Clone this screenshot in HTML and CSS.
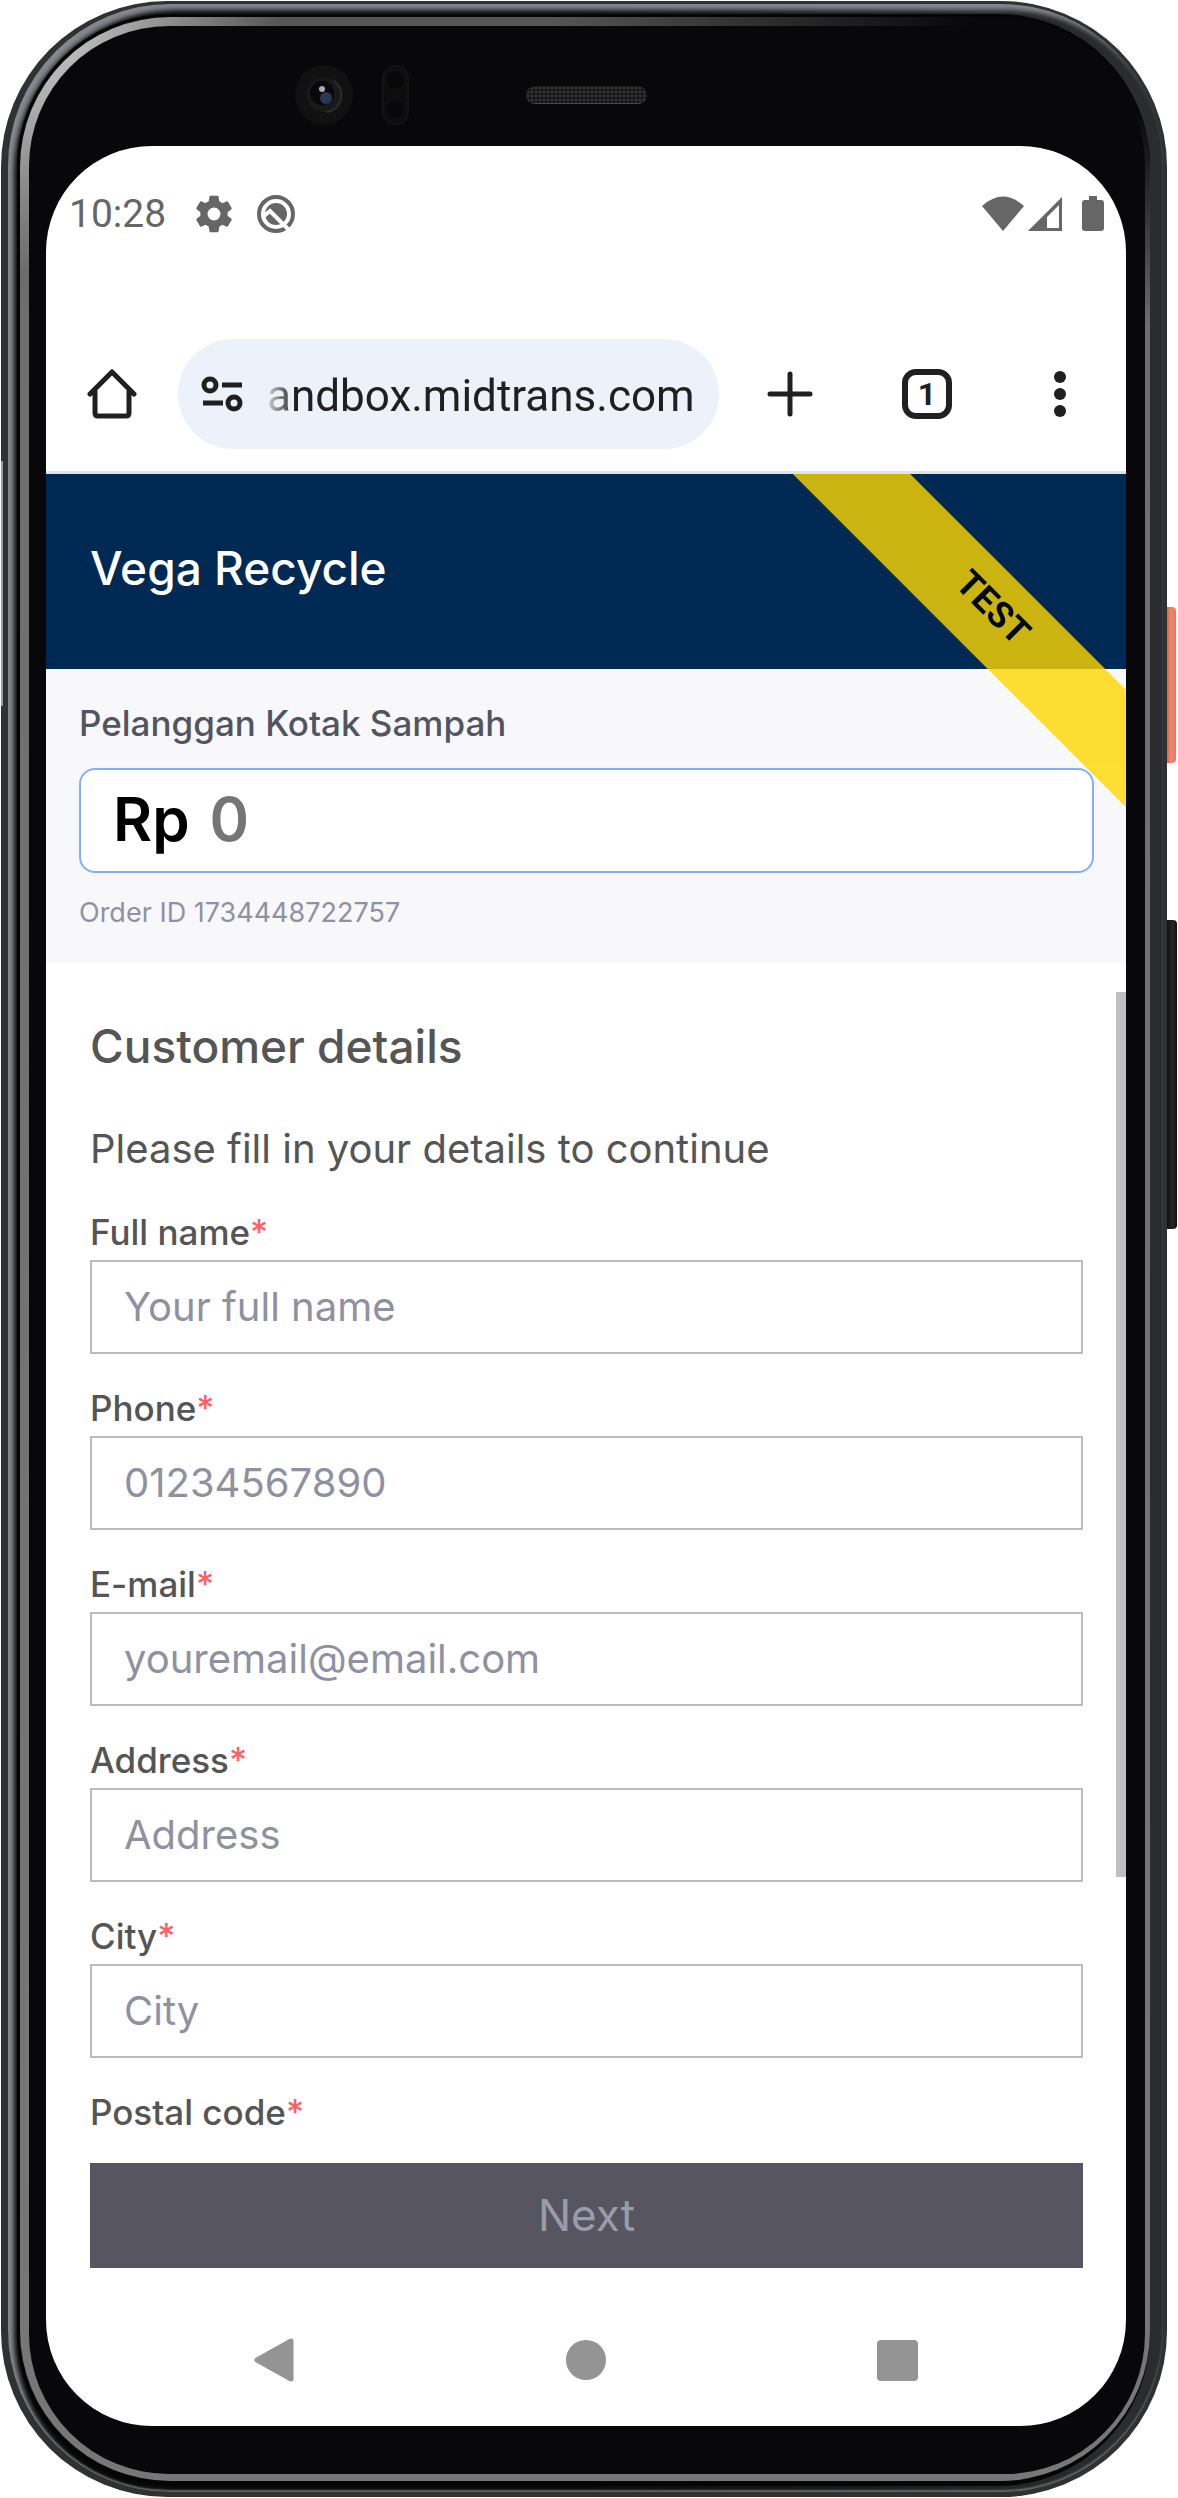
FILE: index.html
```html
<!DOCTYPE html>
<html lang="en">
<head>
<meta charset="utf-8">
<meta name="viewport" content="width=device-width, initial-scale=1">
<title>Vega Recycle</title>
<link rel="stylesheet" href="styles.css">
</head>
<body>
<div class="phone">
  <span class="side-key side-key-power"></span>
  <span class="side-key side-key-volume"></span>
  <span class="side-glint"></span>
  <div class="rim"><div class="groove"><div class="edge"><div class="glass">
    <div class="bezel">
      <svg class="camera" width="60" height="62" viewBox="0 0 60 62" aria-hidden="true">
        <ellipse cx="30" cy="31" rx="29" ry="30" fill="#111112"/>
        <circle cx="30" cy="31" r="17" fill="#19191a"/>
        <path d="M40 17a17 17 0 0 1-8 31" fill="none" stroke="#2c2c2d" stroke-width="2"/>
        <circle cx="28" cy="29" r="12" fill="#08080d"/>
        <circle cx="32" cy="34" r="6" fill="#2c3656"/>
        <circle cx="28" cy="25" r="3" fill="#a8a8ae"/>
      </svg>
      <svg class="sensor" width="27" height="60" viewBox="0 0 27 60" aria-hidden="true">
        <rect x="1" y="1" width="25" height="58" rx="12" fill="#0d0d0e" stroke="#131314" stroke-width="2"/>
        <circle cx="13" cy="15" r="10" fill="#08080a" stroke="#101011" stroke-width="2"/>
        <circle cx="13" cy="44" r="10" fill="#08080a" stroke="#101011" stroke-width="2"/>
      </svg>
      <span class="speaker"></span>
    </div>
    <div class="screen">
      <div class="status">
        <span class="clock">10:28</span>
        <svg class="status-gear" width="38" height="40" viewBox="2 2 20 20" aria-hidden="true"><path fill="#666" d="M19.14 12.94c.04-.3.06-.61.06-.94 0-.32-.02-.64-.07-.94l2.03-1.58a.49.49 0 0 0 .12-.61l-1.92-3.32a.49.49 0 0 0-.59-.22l-2.39.96c-.5-.38-1.03-.7-1.62-.94l-.36-2.54a.48.48 0 0 0-.48-.41h-3.84c-.24 0-.43.17-.47.41l-.36 2.54c-.59.24-1.13.57-1.62.94l-2.39-.96a.48.48 0 0 0-.59.22L2.74 8.87c-.12.21-.08.47.12.61l2.03 1.58c-.05.3-.09.63-.09.94s.02.64.07.94l-2.03 1.58a.49.49 0 0 0-.12.61l1.92 3.32c.12.22.37.29.59.22l2.39-.96c.5.38 1.03.7 1.62.94l.36 2.54c.05.24.24.41.48.41h3.84c.24 0 .44-.17.47-.41l.36-2.54c.59-.24 1.13-.56 1.62-.94l2.39.96c.22.08.47 0 .59-.22l1.92-3.32a.49.49 0 0 0-.12-.61l-2.01-1.58zM12 15.4a3.4 3.4 0 1 1 0-6.8 3.400 3.400 0 0 1 0 6.800z"/></svg>
        <svg width="40" height="40" viewBox="0 0 40 40" aria-hidden="true">
          <circle cx="20" cy="20" r="17" fill="none" stroke="#666" stroke-width="4"/>
          <circle cx="20" cy="20" r="11" fill="#666"/>
          <path d="M8 22l6-5 20 20" fill="none" stroke="#fff" stroke-width="4"/>
        </svg>
        <span class="status-right">
          <svg width="42" height="36" viewBox="0 0 42 36" aria-hidden="true"><path fill="#666" d="M21 35L0 10Q21-9 42 10z"/></svg>
          <svg width="34" height="36" viewBox="0 0 34 36" aria-hidden="true"><path fill="#666" fill-rule="evenodd" d="M34 1v34H0zM31 9L19 21v11h12z"/></svg>
          <svg class="battery" width="22" height="36" viewBox="0 0 22 36" aria-hidden="true"><path fill="#666" d="M7 0h8v4h4q3 0 3 3v25q0 3-3 3H3q-3 0-3-3V7q0-3 3-3h4z"/></svg>
        </span>
      </div>
      <div class="toolbar">
        <button class="icon-button" type="button" aria-label="Home">
          <svg width="50" height="50" viewBox="0 0 50 50" fill="none" stroke="#202020" stroke-width="5" stroke-linecap="round" stroke-linejoin="round" aria-hidden="true"><path d="M3 25L25 3l22 22M8 21v23q0 3 3 3h28q3 0 3-3V21"/></svg>
        </button>
        <div class="address">
          <svg width="42" height="36" viewBox="0 0 42 36" fill="none" stroke="#202020" stroke-width="5" aria-hidden="true"><circle cx="9" cy="9" r="6"/><path d="M21 9h20M2 27h20"/><circle cx="33" cy="27" r="6"/></svg>
          <input class="address-input" type="text" value="andbox.midtrans.com" aria-label="Address bar">
        </div>
        <div class="toolbar-actions">
          <button class="icon-button" type="button" aria-label="New tab">
            <svg width="50" height="50" viewBox="0 0 50 50" stroke="#202020" stroke-width="5" stroke-linecap="round" aria-hidden="true"><path d="M25 5v40M5 25h40"/></svg>
          </button>
          <button class="tab-count" type="button" aria-label="Open tabs">1</button>
          <button class="icon-button" type="button" aria-label="Menu">
            <svg width="42" height="50" viewBox="0 0 42 50" fill="#202020" aria-hidden="true"><circle cx="21" cy="8" r="6"/><circle cx="21" cy="25" r="6"/><circle cx="21" cy="42" r="6"/></svg>
          </button>
        </div>
      </div>
      <div class="page">
        <div class="ribbon-clip"><div class="ribbon">TEST</div></div>
        <header class="merchant"><h1>Vega Recycle</h1></header>
        <section class="order">
          <label class="order-title" for="amount">Pelanggan Kotak Sampah</label>
          <div class="amount"><span>Rp</span><input id="amount" class="amount-input" type="text" placeholder="0"></div>
          <p class="order-id">Order ID 1734448722757</p>
        </section>
        <main class="details">
          <span class="scrollbar"></span>
          <h2>Customer details</h2>
          <p class="lead">Please fill in your details to continue</p>
          <form>
            <div class="field"><label for="name">Full name<em>*</em></label><input id="name" type="text" placeholder="Your full name"></div>
            <div class="field"><label for="phone">Phone<em>*</em></label><input id="phone" type="tel" placeholder="01234567890"></div>
            <div class="field"><label for="email">E-mail<em>*</em></label><input id="email" type="email" placeholder="youremail@email.com"></div>
            <div class="field"><label for="address">Address<em>*</em></label><input id="address" type="text" placeholder="Address"></div>
            <div class="field"><label for="city">City<em>*</em></label><input id="city" type="text" placeholder="City"></div>
            <div class="field field-last"><span class="field-name">Postal code<em>*</em></span></div>
            <button class="next" type="submit">Next</button>
          </form>
        </main>
      </div>
      <nav class="system-nav" aria-label="System">
        <button class="icon-button" type="button" aria-label="Back"><svg width="42" height="46" viewBox="0 0 42 46" aria-hidden="true"><path d="M4 23L38 4v38z" fill="#949494" stroke="#949494" stroke-width="5" stroke-linejoin="round"/></svg></button>
        <button class="icon-button" type="button" aria-label="Home screen"><svg width="42" height="46" viewBox="0 0 42 46" aria-hidden="true"><circle cx="21" cy="23" r="20" fill="#949494"/></svg></button>
        <button class="icon-button" type="button" aria-label="Recent apps"><svg width="42" height="46" viewBox="0 0 42 46" aria-hidden="true"><rect y="3" width="41" height="41" rx="4" fill="#949494"/></svg></button>
      </nav>
    </div>
  </div></div></div></div>
</div>
</body>
</html>
```
FILE: styles.css
```css
* { box-sizing: border-box; }
body {
  margin: 0;
  background: #fff;
  font-family: Inter, "Open Sans", sans-serif;
  color: #555;
}
h1, h2, p { margin: 0; font-weight: 400; }
svg { display: block; flex: none; }
button, input { font: inherit; color: inherit; }

/* Handset */
.phone {
  position: relative;
  margin: 1px 11px 1px 1px;
  padding: 3px 4px 5px 7px;
  border-radius: 166px;
  background: #303131;
}
.rim {
  padding: 10px 13px 6px 9px;
  border-radius: 162px;
  background: linear-gradient(to right, #0a0a0b 50%, #2b2c2e 96%);
  box-shadow: inset 6px 6px 5px #85888e, inset 0 -2px 2px #66686a;
}
.groove {
  padding: 3px 0 5px 3px;
  border-radius: 152px;
  background: #050505;
}
.edge {
  padding: 9px 5px 7px 9px;
  border-radius: 150px;
  background:
    radial-gradient(600px 310px at top right, #08080a 30%, transparent) top / 100% 320px no-repeat,
    radial-gradient(circle at top left, #bbb 60px, transparent 260px),
    linear-gradient(#555, #6e6e6e 300px, #777);
}
.glass {
  padding: 0 19px 48px 17px;
  border-radius: 140px;
  background: #08080a;
}
.side-key {
  position: absolute;
  left: 100%;
  width: 9px;
  border-radius: 0 4px 4px 0;
}
.side-key-power { top: 606px; height: 156px; background: linear-gradient(to right, #d9684f, #f0866c 40%, #e9785d); }
.side-key-volume { top: 919px; height: 309px; width: 10px; background: linear-gradient(to right, #111, #262727 60%, #111); }
.side-glint { position: absolute; left: 0; top: 460px; width: 2px; height: 245px; background: #9b9d9c; }
.bezel {
  display: flex;
  align-items: center;
  height: 120px;
  padding: 18px 0 0 248px;
}
.sensor { margin: 0 117px 0 28px; }
.speaker {
  width: 121px;
  height: 18px;
  border-radius: 9px;
  border-bottom: 1px solid #4a4a4a;
  background: radial-gradient(#333 1px, #151515 2px) 0 0 / 4px 4px;
}

/* Screen */
.screen {
  overflow: hidden;
  border-radius: 106px;
  background: #fff;
}
.status {
  display: flex;
  align-items: center;
  height: 193px;
  padding: 48px 22px 105px 23px;
}
.clock { font: 39px/40px Roboto, sans-serif; color: #666; }
.status-gear { margin: 0 23px 0 29px; }
.status-right { display: flex; align-items: center; gap: 4px; margin-left: auto; }
.battery { margin-left: 16px; }
.toolbar {
  display: flex;
  align-items: center;
  padding: 0 45px 22px 41px;
  border-bottom: 3px solid #dfe3e2;
}
.icon-button { padding: 0; border: 0; background: none; }
.address {
  display: flex;
  flex: 1;
  align-items: center;
  gap: 24px;
  min-width: 0;
  height: 110px;
  margin: 0 46px 0 41px;
  padding: 0 16px 0 23px;
  border-radius: 55px;
  background: #ecf1fa;
}
.address-input {
  flex: 1;
  min-width: 0;
  padding: 4px 0 0;
  border: 0;
  background: none;
  font: 44px/56px Roboto, sans-serif;
  color: #202020;
  -webkit-mask-image: linear-gradient(to right, rgba(0, 0, 0, .15), #000 28px);
  mask-image: linear-gradient(to right, rgba(0, 0, 0, .15), #000 28px);
}
.toolbar-actions { display: flex; align-items: center; gap: 87px; }
.tab-count {
  width: 50px;
  height: 50px;
  padding: 0;
  border: 6px solid #202020;
  border-radius: 14px;
  background: none;
  font: 700 32px/38px Roboto, sans-serif;
  color: #202020;
}

/* Payment page */
.page { position: relative; }
.ribbon-clip {
  position: absolute;
  top: 0;
  right: 0;
  width: 400px;
  height: 400px;
  overflow: hidden;
  pointer-events: none;
}
.ribbon {
  position: absolute;
  top: 96px;
  right: -213px;
  width: 700px;
  padding-bottom: 10px;
  background: #ffd700;
  opacity: .8;
  color: #000;
  font: 700 36px/73px Roboto, sans-serif;
  text-align: center;
  transform: rotate(45deg);
}
.merchant { padding: 64px 44px 71px; background: #002953; color: #fff; }
.merchant h1 { font-size: 46px; line-height: 60px; font-weight: 500; }
.order { padding: 34px 32px 30px 33px; background: #f8f8fb; }
.order-title {
  display: block;
  font-size: 35px;
  line-height: 40px;
  font-weight: 500;
  color: #535461;
}
.amount {
  display: flex;
  align-items: center;
  gap: 20px;
  height: 105px;
  margin: 25px 0 20px;
  padding: 0 32px 4px;
  border: 2px solid #85adff;
  border-radius: 16px;
  background: #fff;
  font-size: 60px;
  line-height: 96px;
  font-weight: 600;
  color: #000;
}
.amount-input { flex: 1; min-width: 0; padding: 0; border: 0; background: none; }
.amount-input::placeholder { color: #757575; }
.order-id { font-size: 27px; line-height: 40px; color: #9091a0; }
.details { position: relative; padding: 53px 43px 0 44px; }
.details h2 { font-size: 46px; line-height: 60px; font-weight: 500; }
.lead { margin: 45px 0 35px; font-size: 40px; line-height: 56px; }
.field { display: flex; flex-direction: column; gap: 8px; margin-bottom: 34px; }
.field-last { margin-bottom: 31px; }
.field label, .field-name { font-size: 35px; line-height: 40px; font-weight: 500; }
.field em { font-style: normal; color: #ff6066; }
.field input {
  width: 100%;
  height: 94px;
  padding: 0 32px 2px;
  border: 2px solid #bbb;
  background: #fff;
  font-size: 40px;
}
.field input::placeholder { color: #9091a0; }
.next {
  display: block;
  width: 100%;
  height: 105px;
  padding: 0 0 2px;
  border: 0;
  background: #575660;
  font-size: 44px;
  color: #999cab;
}
.scrollbar {
  position: absolute;
  top: 29px;
  right: 0;
  width: 10px;
  height: 885px;
  background: #bfbfbf;
}
.system-nav {
  display: grid;
  grid-template-columns: repeat(3, 1fr);
  justify-items: center;
  padding: 69px 72px 43px;
}
```
